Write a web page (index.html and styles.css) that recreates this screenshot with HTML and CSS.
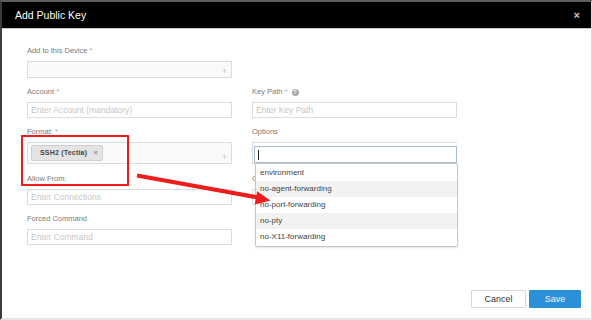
FILE: index.html
```html
<!DOCTYPE html>
<html lang="en">
<head>
    <meta charset="UTF-8">
    <title>Add Public Key</title>
    <link rel="stylesheet" href="styles.css">
</head>
<body>
<div class="modal">
    <div class="modal-header">
        <h1>Add Public Key</h1>
        <span class="close">&times;</span>
    </div>

    <div class="modal-body">
        <div class="field">
            <label>Add to this Device <span class="req">*</span></label>
            <div class="multi"><span class="plus">+</span></div>
        </div>
        <div class="field"></div>

        <div class="field">
            <label>Account <span class="req">*</span></label>
            <input type="text" placeholder="Enter Account (mandatory)">
        </div>
        <div class="field">
            <label>Key Path <span class="req">*</span> <span class="help">?</span></label>
            <input type="text" placeholder="Enter Key Path">
        </div>

        <div class="field tall">
            <label>Format: <span class="req">*</span></label>
            <div class="multi format">
                <span class="tag">SSH2 (Tectia) <span class="tag-x">&times;</span></span>
                <span class="plus">+</span>
            </div>
        </div>
        <div class="field tall options">
            <label>Options</label>
            <div class="search-box">
                <div class="search-input"><span class="caret"></span></div>
            </div>
            <!-- open dropdown -->
            <ul class="dropdown">
                <li>environment</li>
                <li>no-agent-forwarding</li>
                <li>no-port-forwarding</li>
                <li>no-pty</li>
                <li>no-X11-forwarding</li>
            </ul>
        </div>

        <div class="field">
            <label>Allow From:</label>
            <input type="text" placeholder="Enter Connections">
        </div>
        <div class="field under-dropdown">
            <label>C</label>
            <input type="text">
        </div>

        <div class="field">
            <label>Forced Command</label>
            <input type="text" placeholder="Enter Command">
        </div>
        <div class="field"></div>
    </div>

    <div class="modal-footer">
        <button class="btn btn-cancel">Cancel</button>
        <button class="btn btn-save">Save</button>
    </div>

    <!-- annotation: red box and arrow -->
    <svg class="annotation" width="592" height="320" viewBox="0 0 592 320">
        <rect x="22" y="136" width="106" height="49" fill="none" stroke="#ee1c1c" stroke-width="2"/>
        <line x1="137" y1="175.5" x2="258" y2="197.5" stroke="#ee1c1c" stroke-width="4"/>
        <polygon points="270.5,200.5 254.8,204.4 257.2,191.2" fill="#ee1c1c"/>
    </svg>
</div>
</body>
</html>
```

FILE: styles.css
```css
body {
    margin: 0;
    font-family: 'Liberation Sans', Arial, sans-serif;
    background: #fff;
}

.modal {
    position: relative;
    width: 592px;
    height: 320px;
    box-sizing: border-box;
    border-top: 2px solid #5e5e5e;
    border-left: 2px solid #3c3c3c;
    border-right: 1px solid #dcdcdc;
    border-bottom: 2px solid #e6e6e6;
    display: flex;
    flex-direction: column;
    background: #fff;
}

.modal-header {
    height: 26px;
    background: #000;
    border-bottom: 1px solid #c8c8c8;
    display: flex;
    align-items: center;
    justify-content: space-between;
    padding: 0 11px 0 13px;
}

.modal-header h1 {
    margin: 0;
    font-size: 10.5px;
    font-weight: normal;
    color: #fff;
}

.close {
    color: #c8c8c8;
    font-size: 11px;
    font-weight: bold;
}

.modal-body {
    display: grid;
    grid-template-columns: 205px 205px;
    column-gap: 20px;
    padding: 17px 0 0 25px;
}

.field {
    padding-bottom: 9px;
}

.field.tall {
    padding-bottom: 10px;
}

label {
    display: block;
    height: 10px;
    line-height: 10px;
    margin-bottom: 5px;
    font-size: 7.5px;
    color: #7a7a7a;
}

.req {
    color: #aaa;
}

.help {
    display: inline-block;
    width: 7px;
    height: 7px;
    line-height: 7px;
    border-radius: 50%;
    background: #a8a8a8;
    color: #fff;
    font-size: 5.5px;
    font-weight: bold;
    text-align: center;
    vertical-align: 0;
    margin-left: 2px;
}

input {
    display: block;
    width: 100%;
    height: 16px;
    box-sizing: border-box;
    border: 1px solid #dcdcdc;
    padding: 0 3px;
    font-family: inherit;
    font-size: 8.5px;
    color: #555;
    outline: none;
}

input::placeholder {
    color: #c6c6c6;
}

.multi {
    height: 17px;
    box-sizing: border-box;
    border: 1px solid #dcdcdc;
    background: #fafafa;
    display: flex;
    align-items: flex-end;
    justify-content: space-between;
    padding: 0 4px 1px 3px;
}

.multi .plus {
    margin-left: auto;
    color: #c4c4c4;
    font-size: 9px;
    line-height: 10px;
}

.multi.format {
    height: 22px;
    align-items: center;
}

.multi.format .plus {
    align-self: flex-end;
}

.tag {
    display: flex;
    align-items: center;
    gap: 6px;
    height: 16px;
    box-sizing: border-box;
    padding: 0 4px 0 8px;
    background: #e4e4e4;
    border: 1px solid #cfcfcf;
    border-radius: 2px;
    font-size: 7px;
    font-weight: bold;
    color: #444;
    letter-spacing: 0.2px;
}

.tag-x {
    color: #999;
    font-size: 8px;
}

.options {
    position: relative;
}

.search-box {
    height: 22px;
    box-sizing: border-box;
    border: 1px solid #dcdcdc;
    border-right: none;
    padding: 3px 0 0 1px;
    background: #fff;
}

.search-input {
    height: 17px;
    box-sizing: border-box;
    border: 1px solid #a9bccf;
    display: flex;
    align-items: center;
    padding-left: 3px;
}

.caret {
    width: 1px;
    height: 10px;
    background: #222;
}

.dropdown {
    position: absolute;
    left: 3px;
    top: 36px;
    width: 203px;
    box-sizing: border-box;
    margin: 0;
    padding: 1px 0;
    list-style: none;
    background: #fff;
    border: 1px solid #c8c8c8;
    border-radius: 2px;
    box-shadow: 0 1px 2px rgba(0, 0, 0, 0.1);
    z-index: 2;
}

.dropdown li {
    height: 16px;
    line-height: 16px;
    padding-left: 4px;
    font-size: 8px;
    color: #444;
}

.dropdown li:nth-child(even) {
    background: #f2f2f2;
}

.modal-footer {
    margin-top: auto;
    display: flex;
    justify-content: flex-end;
    gap: 3px;
    padding: 0 10px 10px 0;
}

.btn {
    height: 18px;
    box-sizing: border-box;
    font-family: inherit;
    font-size: 9px;
    padding: 0;
    border-radius: 1px;
}

.btn-cancel {
    width: 55px;
    background: #fff;
    border: 1px solid #d6d6d6;
    color: #333;
}

.btn-save {
    width: 52px;
    background: #2a90d8;
    border: 1px solid #2a90d8;
    color: #eef6fc;
}

.annotation {
    position: absolute;
    left: -2px;
    top: -2px;
    pointer-events: none;
    z-index: 3;
}
```
